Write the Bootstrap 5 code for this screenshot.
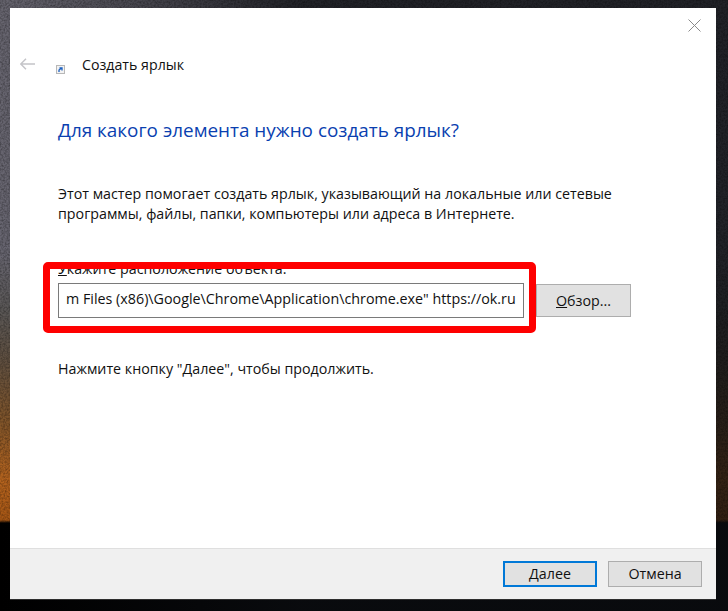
<!DOCTYPE html>
<html lang="ru">
<head>
<meta charset="utf-8">
<link href="https://cdn.jsdelivr.net/npm/bootstrap@5.3.0/dist/css/bootstrap.min.css" rel="stylesheet">
<style>
html, body { height: 611px; overflow: hidden; }
body {
  font-family: "Open Sans", "Noto Sans", sans-serif;
  background:
    url("data:image/svg+xml,%3Csvg xmlns='http://www.w3.org/2000/svg' width='728' height='523'%3E%3Cfilter id='n'%3E%3CfeTurbulence type='fractalNoise' baseFrequency='.55' numOctaves='2'/%3E%3CfeColorMatrix values='0 0 0 0 0 0 0 0 0 0 0 0 0 0 0 1.6 0 0 0 -.55'/%3E%3C/filter%3E%3Crect width='728' height='523' filter='url(%23n)' opacity='.4'/%3E%3C/svg%3E") 0 0 no-repeat,
    linear-gradient(90deg, rgba(12,14,18,0) 0, rgba(12,14,18,.06) 30px, rgba(12,14,18,.76) 300px, rgba(12,14,18,.76) 100%),
    linear-gradient(180deg, #66646e 0, #676570 250px, #5a5756 310px, #5f4f40 360px, #7f542a 420px, #b4631e 480px, #a85715 520px, #000 523px, #000 611px);
  padding: 8px 12px 11px 10px;
  color: #111;
  font-size: 14.25px;
}
.wiz { height: 592px; background: #fff; border-bottom: 1px solid #2e2e2e; }
.wiz-main { padding: 0 48px; position: relative; }
.wiz-close { position: absolute; right: 15px; top: 11px; }
.wiz-head { height: 40px; margin-top: 37px; margin-left: -38px; }
.wiz-arrow { margin-top: -2px; }
.wiz-icon { margin-left: 21px; margin-top: 9px; }
.wiz-head-title { font-size: 14.2px; margin-left: 17px; }
.wiz-h { color: #0a3fb0; font-size: 18.9px; margin: 31px 0 0; line-height: 28px; }
.wiz-intro { margin: 40px 0 0; line-height: 20px; }
.wiz-label { margin: 35px 0 0; line-height: 20px; }
.wiz-row { margin-top: 4px; }
.wiz-input { width: 466px; height: 35px; border: 1px solid #7a7a7a; padding: 0 7px; line-height: 30px; white-space: nowrap; overflow: hidden; font-size: 14.3px; }
.wiz-field { position: relative; }
.wiz-ring { position: absolute; left: -15px; top: -21px; width: 493px; height: 71px; border: 7px solid #fe0000; border-radius: 5px; pointer-events: none; }
.wiz-btn { background: #e1e1e1; border: 1px solid #adadad; border-radius: 0; font-size: 14.25px; color: #111; padding: 0; height: 33px; }
.wiz-btn:hover { background: #e1e1e1; }
.wiz-browse { width: 95px; margin-left: 12px; }
.wiz-next { margin: 41px 0 0; line-height: 20px; }
.wiz-foot { height: 51px; background: #f0f0f0; border-top: 1px solid #dfdfdf; padding: 12px 14px 0 0; gap: 11px; }
.wiz-act { width: 94px; height: 26px; line-height: 1; }
.wiz-primary { border: 2px solid #0078d7; }
</style>
</head>
<body>
<div class="wiz d-flex flex-column">
  <div class="wiz-main flex-grow-1">
    <svg class="wiz-close" width="13" height="13" viewBox="0 0 13 13"><path d="M.5 .5L12.5 12.5M12.5 .5L.5 12.5" stroke="#8a8a8a" stroke-width="1" fill="none"/></svg>
    <div class="wiz-head d-flex align-items-center">
      <svg class="wiz-arrow" width="15" height="12" viewBox="0 0 15 12"><path d="M.5 6H15M6 .7L.8 6L6 11.3" stroke="#c4c4c8" stroke-width="1.4" fill="none"/></svg>
      <svg class="wiz-icon" width="9" height="9" viewBox="0 0 9 9"><rect x=".5" y=".5" width="8" height="8" fill="#f2f2f2" stroke="#b8b8b8"/><path d="M3 7V5L5 3.5M3.5 3H6V5.5" stroke="#1a5fc0" stroke-width="1.3" fill="none"/></svg>
      <span class="wiz-head-title">Создать ярлык</span>
    </div>
    <h1 class="wiz-h fw-normal">Для какого элемента нужно создать ярлык?</h1>
    <p class="wiz-intro">Этот мастер помогает создать ярлык, указывающий на локальные или сетевые<br>программы, файлы, папки, компьютеры или адреса в Интернете.</p>
    <div class="wiz-label"><u>У</u>кажите расположение объекта:</div>
    <div class="wiz-row d-flex align-items-center">
      <div class="wiz-field">
        <div class="wiz-input">m Files (x86)\Google\Chrome\Application\chrome.exe" https://ok.ru</div>
        <div class="wiz-ring"></div>
      </div>
      <button class="btn wiz-btn wiz-browse" type="button"><u>О</u>бзор...</button>
    </div>
    <p class="wiz-next">Нажмите кнопку "Далее", чтобы продолжить.</p>
  </div>
  <div class="wiz-foot d-flex justify-content-end">
    <button class="btn wiz-btn wiz-act wiz-primary" type="button"><u>Д</u>алее</button>
    <button class="btn wiz-btn wiz-act" type="button">Отмена</button>
  </div>
</div>
<script src="https://cdn.jsdelivr.net/npm/bootstrap@5.3.0/dist/js/bootstrap.bundle.min.js"></script>
</body>
</html>
